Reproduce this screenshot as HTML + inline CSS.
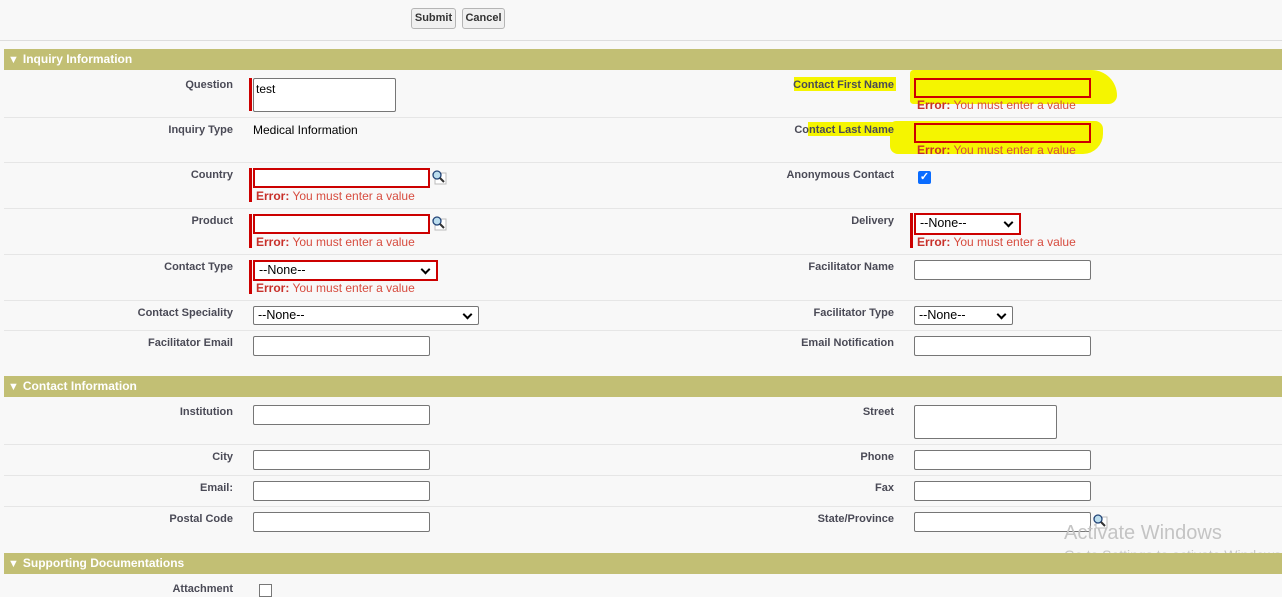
<!DOCTYPE html>
<html><head><style>
body{margin:0;width:1282px;height:586px;background:#f8f8f8;font-family:"Liberation Sans",Arial,sans-serif;position:relative;overflow:hidden}
.a{position:absolute}
.l{position:absolute;font-size:11px;font-weight:bold;color:#4a4a56;text-align:right;width:220px;margin-top:1px}
.ln{position:absolute;left:4px;width:1278px;height:1px;background:#e6e6e6}
.i{position:absolute;width:175px;height:18px;border:1px solid #767676;border-radius:2px;background:#fff}
.r{border:2px solid #c00;width:173px;height:16px;border-radius:0}
.e{position:absolute;font-size:12px;color:#d74c3f}
.e b{font-weight:bold;color:#c8302a}
.bar{position:absolute;width:3px;background:#c00}
.sec{position:absolute;left:4px;width:1278px;height:21px;background:#c2bf74;color:#fff;font-size:12px;font-weight:bold;line-height:21px}
.sec span{font-size:11px;margin:0 4px 0 4px}
.sel{position:absolute;background:#fff;border:1px solid #767676;border-radius:2px;font-size:12.5px;color:#000;padding-left:4px;box-sizing:border-box;line-height:17px}
.sel:after{content:"";position:absolute;right:7px;top:4px;width:5px;height:5px;border-right:2px solid #000;border-bottom:2px solid #000;transform:rotate(45deg)}
.ta{position:absolute;width:141px;height:32px;border:1px solid #767676;border-radius:2px;background:#fff}
.lk{position:absolute;width:16px;height:16px}
.btn{position:absolute;top:8px;height:19px;border:1px solid #b5b5b5;border-radius:3px;background:#f0f0f0;font-size:11px;font-weight:bold;color:#333;text-align:center;line-height:19px}
.hl{position:absolute;background:#f5f500}
</style></head><body>
<div class="btn" style="left:411px;width:43px">Submit</div>
<div class="btn" style="left:462px;width:41px">Cancel</div>
<div class="a" style="left:0;top:40px;width:1282px;height:1px;background:#ddd"></div>

<div class="sec" style="top:49px"><span>▼</span>Inquiry Information</div>
<div class="hl" style="left:794px;top:77px;width:102px;height:14px"></div>
<div class="hl" style="left:910px;top:70px;width:207px;height:34px;border-radius:4px 30px 10px 4px"></div>
<div class="hl" style="left:808px;top:122px;width:90px;height:14px"></div>
<div class="hl" style="left:890px;top:121px;width:213px;height:33px;border-radius:6px 8px 20px 8px"></div>

<div class="ln" style="top:117px"></div><div class="ln" style="top:162px"></div><div class="ln" style="top:208px"></div><div class="ln" style="top:254px"></div><div class="ln" style="top:300px"></div><div class="ln" style="top:330px"></div>
<div class="ln" style="top:444px"></div><div class="ln" style="top:475px"></div><div class="ln" style="top:506px"></div>

<div class="l" style="left:13px;top:78px">Question</div>
<div class="bar" style="left:249px;top:78px;height:33px"></div>
<div class="ta" style="left:253px;top:78px"><span style="font-size:12px;position:absolute;left:2px;top:3px">test</span></div>
<div class="l" style="left:13px;top:123px">Inquiry Type</div>
<div class="a" style="left:253px;top:123px;font-size:12px;color:#000">Medical Information</div>

<div class="l" style="left:13px;top:168px">Country</div>
<div class="bar" style="left:249px;top:168px;height:34px"></div>
<div class="i r" style="left:253px;top:168px"></div>
<svg class="lk" style="left:431px;top:169px" viewBox="0 0 16 16"><rect x="4" y="4" width="11" height="11" fill="#fff" stroke="#bbb"/><circle cx="6" cy="6" r="4" fill="#bde" stroke="#247" stroke-width="1.3"/><line x1="9" y1="9" x2="13" y2="13" stroke="#333" stroke-width="2"/></svg>
<div class="e" style="left:256px;top:189px"><b>Error:</b> You must enter a value</div>

<div class="l" style="left:13px;top:214px">Product</div>
<div class="bar" style="left:249px;top:214px;height:34px"></div>
<div class="i r" style="left:253px;top:214px"></div>
<svg class="lk" style="left:431px;top:215px" viewBox="0 0 16 16"><rect x="4" y="4" width="11" height="11" fill="#fff" stroke="#bbb"/><circle cx="6" cy="6" r="4" fill="#bde" stroke="#247" stroke-width="1.3"/><line x1="9" y1="9" x2="13" y2="13" stroke="#333" stroke-width="2"/></svg>
<div class="e" style="left:256px;top:235px"><b>Error:</b> You must enter a value</div>

<div class="l" style="left:13px;top:260px">Contact Type</div>
<div class="bar" style="left:249px;top:260px;height:34px"></div>
<div class="sel" style="left:253px;top:260px;width:185px;height:21px;border:2px solid #c00;border-radius:0">--None--</div>
<div class="e" style="left:256px;top:281px"><b>Error:</b> You must enter a value</div>

<div class="l" style="left:13px;top:306px">Contact Speciality</div>
<div class="sel" style="left:253px;top:306px;width:226px;height:19px">--None--</div>
<div class="l" style="left:13px;top:336px">Facilitator Email</div>
<div class="i" style="left:253px;top:336px"></div>

<div class="l" style="left:674px;top:78px">Contact First Name</div>
<div class="i r" style="left:914px;top:78px;background:transparent"></div>
<div class="e" style="left:917px;top:98px"><b>Error:</b> You must enter a value</div>
<div class="l" style="left:674px;top:123px">Contact Last Name</div>
<div class="i r" style="left:914px;top:123px;background:transparent"></div>
<div class="e" style="left:917px;top:143px"><b>Error:</b> You must enter a value</div>
<div class="l" style="left:674px;top:168px">Anonymous Contact</div>
<div class="a" style="left:918px;top:171px;width:13px;height:13px;background:#0a6cff;border-radius:2px;color:#fff;font-size:11px;line-height:13px;text-align:center;font-weight:bold">✓</div>
<div class="l" style="left:674px;top:214px">Delivery</div>
<div class="bar" style="left:910px;top:213px;height:35px"></div>
<div class="sel" style="left:914px;top:213px;width:107px;height:22px;border:2px solid #c00;border-radius:0">--None--</div>
<div class="e" style="left:917px;top:235px"><b>Error:</b> You must enter a value</div>
<div class="l" style="left:674px;top:260px">Facilitator Name</div>
<div class="i" style="left:914px;top:260px"></div>
<div class="l" style="left:674px;top:306px">Facilitator Type</div>
<div class="sel" style="left:914px;top:306px;width:99px;height:19px">--None--</div>
<div class="l" style="left:674px;top:336px">Email Notification</div>
<div class="i" style="left:914px;top:336px"></div>

<div class="sec" style="top:376px"><span>▼</span>Contact Information</div>
<div class="l" style="left:13px;top:405px">Institution</div><div class="i" style="left:253px;top:405px"></div>
<div class="l" style="left:13px;top:450px">City</div><div class="i" style="left:253px;top:450px"></div>
<div class="l" style="left:13px;top:481px">Email:</div><div class="i" style="left:253px;top:481px"></div>
<div class="l" style="left:13px;top:512px">Postal Code</div><div class="i" style="left:253px;top:512px"></div>
<div class="l" style="left:674px;top:405px">Street</div><div class="ta" style="left:914px;top:405px"></div>
<div class="l" style="left:674px;top:450px">Phone</div><div class="i" style="left:914px;top:450px"></div>
<div class="l" style="left:674px;top:481px">Fax</div><div class="i" style="left:914px;top:481px"></div>
<div class="l" style="left:674px;top:512px">State/Province</div><div class="i" style="left:914px;top:512px"></div>
<svg class="lk" style="left:1092px;top:513px" viewBox="0 0 16 16"><rect x="4" y="4" width="11" height="11" fill="#fff" stroke="#bbb"/><circle cx="6" cy="6" r="4" fill="#bde" stroke="#247" stroke-width="1.3"/><line x1="9" y1="9" x2="13" y2="13" stroke="#333" stroke-width="2"/></svg>

<div class="a" style="left:1064px;top:522px;font-size:20px;color:#c4c4c4">Activate Windows</div>
<div class="a" style="left:1064px;top:547px;font-size:14px;color:#c8c8c8;white-space:nowrap">Go to Settings to activate Windows.</div>

<div class="sec" style="top:553px"><span>▼</span>Supporting Documentations</div>
<div class="l" style="left:13px;top:582px">Attachment</div>
<div class="a" style="left:259px;top:584px;width:11px;height:11px;border:1px solid #777;background:#fff"></div>
</body></html>
